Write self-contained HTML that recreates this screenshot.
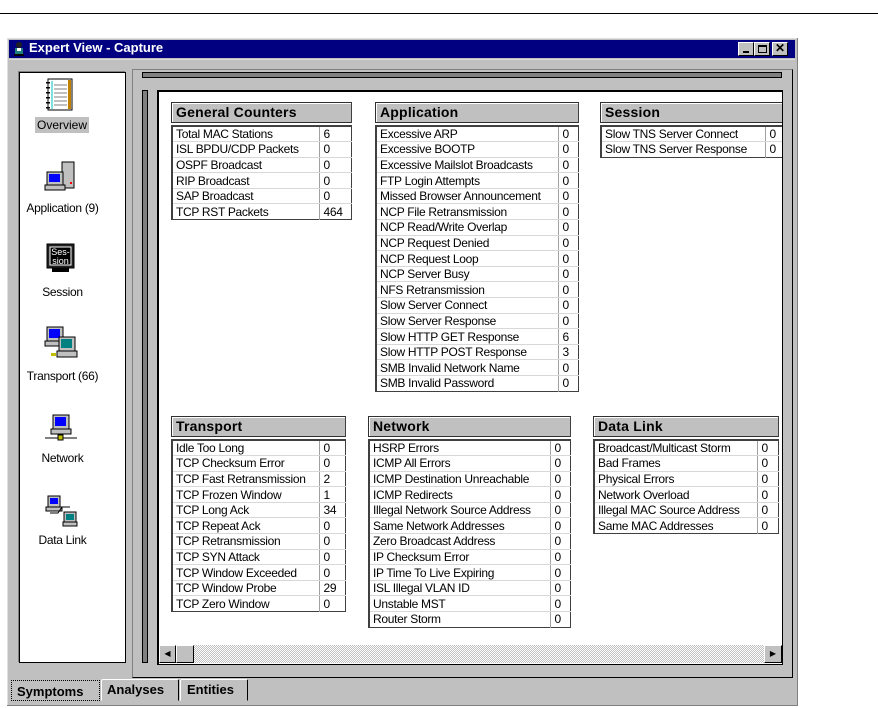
<!DOCTYPE html>
<html><head><meta charset="utf-8"><style>
*{margin:0;padding:0;box-sizing:border-box}
body{width:878px;height:708px;background:#fff;position:relative;overflow:hidden;font-family:"Liberation Sans",sans-serif;font-size:12px;color:#000}
.a{position:absolute}
.hdr{position:absolute;height:21px;background:#c0c0c0;border:1px solid #303030;border-right-color:#404040;font-weight:bold;font-size:14px;padding:1px 0 0 4px;letter-spacing:0.2px;box-shadow:inset 1px 1px 0 #fff}
table{position:absolute;border-collapse:collapse;background:#fff;border:2px solid #404040;border-right:1px solid #404040;border-bottom:1px solid #404040}
td{height:15.6px;padding:1px 0 0 3px;border-bottom:1px solid #d8d8d8;font-size:12px;line-height:13px;white-space:nowrap;letter-spacing:-0.3px}
td.v{border-left:1px solid #a0a0a0;padding-left:4px}
tr:last-child td{border-bottom:none}
.lbl{position:absolute;width:105px;text-align:center;font-size:12px;letter-spacing:-0.3px}
</style></head><body>
<div class="a" style="left:0;top:13px;width:878px;height:1px;background:#000"></div>
<div class="a" style="left:7px;top:38px;width:791px;height:668px;background:#c0c0c0;border-right:1px solid #808080;border-bottom:1px solid #808080;box-shadow:inset 1px 1px 0 #dfdfdf"></div>
<div class="a" style="left:9px;top:40px;width:786px;height:18px;background:#000080"></div>
<div class="a" style="left:12px;top:41px;width:14px;height:16px">
<svg width="14" height="16"><circle cx="7" cy="4" r="3" fill="#202020"/><rect x="3" y="7" width="8" height="6" fill="#208080"/><rect x="5" y="7" width="4" height="3" fill="#fff"/><rect x="2" y="13" width="10" height="2" fill="#000"/></svg></div>
<div class="a" style="left:29px;top:40px;color:#fff;font-weight:bold;font-size:13px">Expert View - Capture</div>
<div class="a" style="left:738px;top:42px;width:16px;height:14px;background:#c0c0c0;border:1px solid;border-color:#fff #000 #000 #fff"><div class="a" style="left:4px;top:8px;width:6px;height:2px;background:#000"></div></div>
<div class="a" style="left:754px;top:42px;width:16px;height:14px;background:#c0c0c0;border:1px solid;border-color:#fff #000 #000 #fff"><div class="a" style="left:3px;top:2px;width:9px;height:8px;border:1px solid #000;border-top-width:2px"></div></div>
<div class="a" style="left:772px;top:42px;width:16px;height:14px;background:#c0c0c0;border:1px solid;border-color:#fff #000 #000 #fff;font-weight:bold;font-size:12px;line-height:11px;text-align:center">✕</div>
<div class="a" style="left:9px;top:59px;width:786px;height:1px;background:#dcdcdc"></div>
<div class="a" style="left:19px;top:72px;width:107px;height:591px;background:#fff;border:1px solid #000;box-shadow:-1px -1px 0 #808080"></div>
<svg class="a" style="left:44px;top:78px" width="32" height="34"><rect x="4" y="1" width="24" height="31" fill="#fff" stroke="#000"/><rect x="24" y="2" width="3" height="29" fill="#c08000"/><line x1="8" y1="3" x2="8" y2="31" stroke="#00c0c0"/><g stroke="#808080"><line x1="10" y1="7" x2="23" y2="7"/><line x1="10" y1="11" x2="23" y2="11"/><line x1="10" y1="15" x2="23" y2="15"/><line x1="10" y1="19" x2="23" y2="19"/><line x1="10" y1="23" x2="23" y2="23"/><line x1="10" y1="27" x2="23" y2="27"/></g><g fill="#000"><rect x="2" y="4" width="4" height="1.5"/><rect x="2" y="9" width="4" height="1.5"/><rect x="2" y="14" width="4" height="1.5"/><rect x="2" y="19" width="4" height="1.5"/><rect x="2" y="24" width="4" height="1.5"/><rect x="2" y="29" width="4" height="1.5"/></g></svg>
<div class="a" style="left:35px;top:117px;width:54px;height:16px;background:#c0c0c0;font-size:12px;text-align:center;line-height:16px">Overview</div>
<svg class="a" style="left:44px;top:160px" width="34" height="32"><rect x="18" y="2" width="12" height="26" fill="#c0c0c0" stroke="#000"/><rect x="3" y="12" width="16" height="13" fill="#c0c0c0" stroke="#000"/><rect x="5" y="14" width="11" height="8" fill="#0000ff"/><rect x="1" y="25" width="20" height="5" fill="#c0c0c0" stroke="#000"/><rect x="26" y="22" width="2" height="2" fill="#f00"/></svg>
<div class="lbl" style="left:10px;top:201px">Application (9)</div>
<svg class="a" style="left:46px;top:243px" width="30" height="30"><rect x="1" y="1" width="27" height="24" fill="#202020" stroke="#000"/><rect x="4" y="4" width="21" height="18" fill="#000" stroke="#fff"/><text x="14.5" y="12" font-size="9" fill="#fff" text-anchor="middle" font-family="Liberation Sans">Ses-</text><text x="14.5" y="21" font-size="9" fill="#fff" text-anchor="middle" font-family="Liberation Sans">sion</text><rect x="6" y="25" width="17" height="4" fill="#000"/></svg>
<div class="lbl" style="left:10px;top:285px">Session</div>
<svg class="a" style="left:43px;top:325px" width="36" height="36"><rect x="4" y="2" width="16" height="14" fill="#c0c0c0" stroke="#000"/><rect x="6" y="4" width="11" height="9" fill="#0000ff"/><rect x="2" y="16" width="20" height="5" fill="#c0c0c0" stroke="#000"/><rect x="16" y="12" width="16" height="14" fill="#c0c0c0" stroke="#000"/><rect x="18" y="14" width="11" height="9" fill="#008080"/><rect x="14" y="26" width="20" height="6" fill="#c0c0c0" stroke="#000"/><rect x="8" y="28" width="5" height="3" fill="#c0c000"/></svg>
<div class="lbl" style="left:10px;top:369px">Transport (66)</div>
<svg class="a" style="left:44px;top:413px" width="34" height="30"><rect x="9" y="2" width="16" height="14" fill="#c0c0c0" stroke="#000"/><rect x="11" y="4" width="11" height="9" fill="#0000ff"/><rect x="7" y="16" width="20" height="5" fill="#c0c0c0" stroke="#000"/><line x1="1" y1="25" x2="33" y2="25" stroke="#808080" stroke-width="2"/><rect x="14" y="22" width="5" height="5" fill="#c0c000" stroke="#000"/></svg>
<div class="lbl" style="left:10px;top:451px">Network</div>
<svg class="a" style="left:44px;top:495px" width="34" height="32"><rect x="4" y="1" width="12" height="11" fill="#c0c0c0" stroke="#000"/><rect x="6" y="3" width="8" height="6" fill="#0000ff"/><rect x="2" y="12" width="16" height="4" fill="#c0c0c0" stroke="#000"/><polyline points="6,18 14,18 18,12 26,12" fill="none" stroke="#000"/><rect x="20" y="17" width="12" height="10" fill="#c0c0c0" stroke="#000"/><rect x="22" y="19" width="8" height="6" fill="#008080"/><rect x="19" y="27" width="14" height="4" fill="#c0c0c0" stroke="#000"/></svg>
<div class="lbl" style="left:10px;top:533px">Data Link</div>
<div class="a" style="left:132px;top:69px;width:661px;height:609px;border:1px solid;border-color:#808080 #000 #000 #808080"></div>
<div class="a" style="left:142px;top:72px;width:640px;height:6px;background:#808080;border:1px solid #000"></div>
<div class="a" style="left:142px;top:90px;width:6px;height:573px;background:#808080;border:1px solid #000"></div>
<div class="a" style="left:157px;top:90px;width:626px;height:575px;background:#fff;border:1px solid #000;border-left-width:2px;border-top-width:2px"></div>
<div class="a" style="left:159px;top:645px;width:623px;height:18px;background-color:#e0e0e0;background-image:repeating-conic-gradient(#c0c0c0 0 25%,#fff 0 50%);background-size:2px 2px"></div>
<div class="a" style="left:159px;top:645px;width:17px;height:18px;background:#c0c0c0;border:1px solid;border-color:#fff #000 #000 #fff;font-size:8px;line-height:16px;text-align:center">◀</div>
<div class="a" style="left:176px;top:645px;width:18px;height:18px;background:#c0c0c0;border:1px solid;border-color:#fff #000 #000 #fff"></div>
<div class="a" style="left:764px;top:645px;width:18px;height:18px;background:#c0c0c0;border:1px solid;border-color:#fff #000 #000 #fff;font-size:8px;line-height:16px;text-align:center">▶</div>
<div class="a" style="left:101px;top:679px;width:78px;height:22px;border:1px solid;border-color:#fff #000 transparent #fff;border-radius:2px 2px 0 0;font-weight:bold;font-size:13px;padding:2px 0 0 5px">Analyses</div>
<div class="a" style="left:180px;top:679px;width:68px;height:22px;border:1px solid;border-color:#fff #000 transparent #fff;border-radius:2px 2px 0 0;font-weight:bold;font-size:13px;padding:2px 0 0 6px">Entities</div>
<div class="a" style="left:11px;top:680px;width:89px;height:21px;border:1px dotted #000;font-weight:bold;font-size:13px;padding:3px 0 0 5px">Symptoms</div>
<div class="hdr" style="left:171px;top:102px;width:181px">General Counters</div>
<table style="left:171px;top:125px;width:181px"><colgroup><col style="width:147px"><col></colgroup>
<tr><td>Total MAC Stations</td><td class="v">6</td></tr>
<tr><td>ISL BPDU/CDP Packets</td><td class="v">0</td></tr>
<tr><td>OSPF Broadcast</td><td class="v">0</td></tr>
<tr><td>RIP Broadcast</td><td class="v">0</td></tr>
<tr><td>SAP Broadcast</td><td class="v">0</td></tr>
<tr><td>TCP RST Packets</td><td class="v">464</td></tr></table>
<div class="hdr" style="left:375px;top:102px;width:204px">Application</div>
<table style="left:375px;top:125px;width:204px"><colgroup><col style="width:182px"><col></colgroup>
<tr><td>Excessive ARP</td><td class="v">0</td></tr>
<tr><td>Excessive BOOTP</td><td class="v">0</td></tr>
<tr><td>Excessive Mailslot Broadcasts</td><td class="v">0</td></tr>
<tr><td>FTP Login Attempts</td><td class="v">0</td></tr>
<tr><td>Missed Browser Announcement</td><td class="v">0</td></tr>
<tr><td>NCP File Retransmission</td><td class="v">0</td></tr>
<tr><td>NCP Read/Write Overlap</td><td class="v">0</td></tr>
<tr><td>NCP Request Denied</td><td class="v">0</td></tr>
<tr><td>NCP Request Loop</td><td class="v">0</td></tr>
<tr><td>NCP Server Busy</td><td class="v">0</td></tr>
<tr><td>NFS Retransmission</td><td class="v">0</td></tr>
<tr><td>Slow Server Connect</td><td class="v">0</td></tr>
<tr><td>Slow Server Response</td><td class="v">0</td></tr>
<tr><td>Slow HTTP GET Response</td><td class="v">6</td></tr>
<tr><td>Slow HTTP POST Response</td><td class="v">3</td></tr>
<tr><td>SMB Invalid Network Name</td><td class="v">0</td></tr>
<tr><td>SMB Invalid Password</td><td class="v">0</td></tr></table>
<div class="hdr" style="left:600px;top:102px;width:182px;border-right:none">Session</div>
<table style="left:600px;top:125px;width:182px;border-right:none"><colgroup><col style="width:164px"><col></colgroup>
<tr><td>Slow TNS Server Connect</td><td class="v">0</td></tr>
<tr><td>Slow TNS Server Response</td><td class="v">0</td></tr></table>
<div class="hdr" style="left:171px;top:416px;width:175px">Transport</div>
<table style="left:171px;top:439px;width:175px"><colgroup><col style="width:147px"><col></colgroup>
<tr><td>Idle Too Long</td><td class="v">0</td></tr>
<tr><td>TCP Checksum Error</td><td class="v">0</td></tr>
<tr><td>TCP Fast Retransmission</td><td class="v">2</td></tr>
<tr><td>TCP Frozen Window</td><td class="v">1</td></tr>
<tr><td>TCP Long Ack</td><td class="v">34</td></tr>
<tr><td>TCP Repeat Ack</td><td class="v">0</td></tr>
<tr><td>TCP Retransmission</td><td class="v">0</td></tr>
<tr><td>TCP SYN Attack</td><td class="v">0</td></tr>
<tr><td>TCP Window Exceeded</td><td class="v">0</td></tr>
<tr><td>TCP Window Probe</td><td class="v">29</td></tr>
<tr><td>TCP Zero Window</td><td class="v">0</td></tr></table>
<div class="hdr" style="left:368px;top:416px;width:203px">Network</div>
<table style="left:368px;top:439px;width:203px"><colgroup><col style="width:181px"><col></colgroup>
<tr><td>HSRP Errors</td><td class="v">0</td></tr>
<tr><td>ICMP All Errors</td><td class="v">0</td></tr>
<tr><td>ICMP Destination Unreachable</td><td class="v">0</td></tr>
<tr><td>ICMP Redirects</td><td class="v">0</td></tr>
<tr><td>Illegal Network Source Address</td><td class="v">0</td></tr>
<tr><td>Same Network Addresses</td><td class="v">0</td></tr>
<tr><td>Zero Broadcast Address</td><td class="v">0</td></tr>
<tr><td>IP Checksum Error</td><td class="v">0</td></tr>
<tr><td>IP Time To Live Expiring</td><td class="v">0</td></tr>
<tr><td>ISL Illegal VLAN ID</td><td class="v">0</td></tr>
<tr><td>Unstable MST</td><td class="v">0</td></tr>
<tr><td>Router Storm</td><td class="v">0</td></tr></table>
<div class="hdr" style="left:593px;top:416px;width:186px">Data Link</div>
<table style="left:593px;top:439px;width:186px"><colgroup><col style="width:163px"><col></colgroup>
<tr><td>Broadcast/Multicast Storm</td><td class="v">0</td></tr>
<tr><td>Bad Frames</td><td class="v">0</td></tr>
<tr><td>Physical Errors</td><td class="v">0</td></tr>
<tr><td>Network Overload</td><td class="v">0</td></tr>
<tr><td>Illegal MAC Source Address</td><td class="v">0</td></tr>
<tr><td>Same MAC Addresses</td><td class="v">0</td></tr></table>
</body></html>
